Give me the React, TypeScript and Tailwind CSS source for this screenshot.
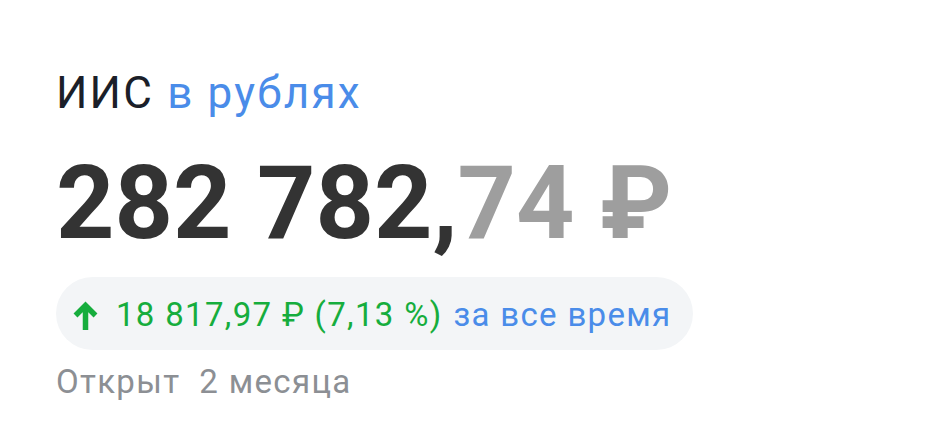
// Карточка счёта: название, стоимость, доходность и срок
export default function App() {
  return (
    <div className="min-h-screen bg-white pl-[56px] pt-[67px] font-['Roboto',sans-serif]">
      <h1 className="text-[44px] leading-[52px] font-normal tracking-[0.05em] text-[#1b1f29]">
        ИИС <span className="text-[#4a8ce9]">в рублях</span>
      </h1>

      <div className="mt-[33px] text-[102px] leading-[102px] font-bold text-[#333333]">
        282 782,<span className="text-[#9e9e9e]">74 ₽</span>
      </div>

      <div className="mt-[23px] inline-flex items-center rounded-full bg-[#f3f5f7] pl-[17px] pr-[21px] pt-[18px] pb-[15px] text-[33px] leading-[40px] tracking-[0.04em]">
        <svg viewBox="0 0 25 29" className="mr-[18px] h-[29px] w-[25px] text-[#16ad3d]">
          <path d="M12.5 29V6M2.5 14.5l10-10 10 10" fill="none" stroke="currentColor" strokeWidth="5.5" strokeLinejoin="miter" />
        </svg>
        <span className="text-[#16ad3d]">18 817,97 ₽ (7,13 %)</span>
        <span className="ml-[11px] text-[#4a8ce9]">за все время</span>
      </div>

      <p className="mt-[12px] whitespace-pre text-[33px] leading-[40px] tracking-[0.04em] text-[#8c8f94]">Открыт  2 месяца</p>
    </div>
  )
}
